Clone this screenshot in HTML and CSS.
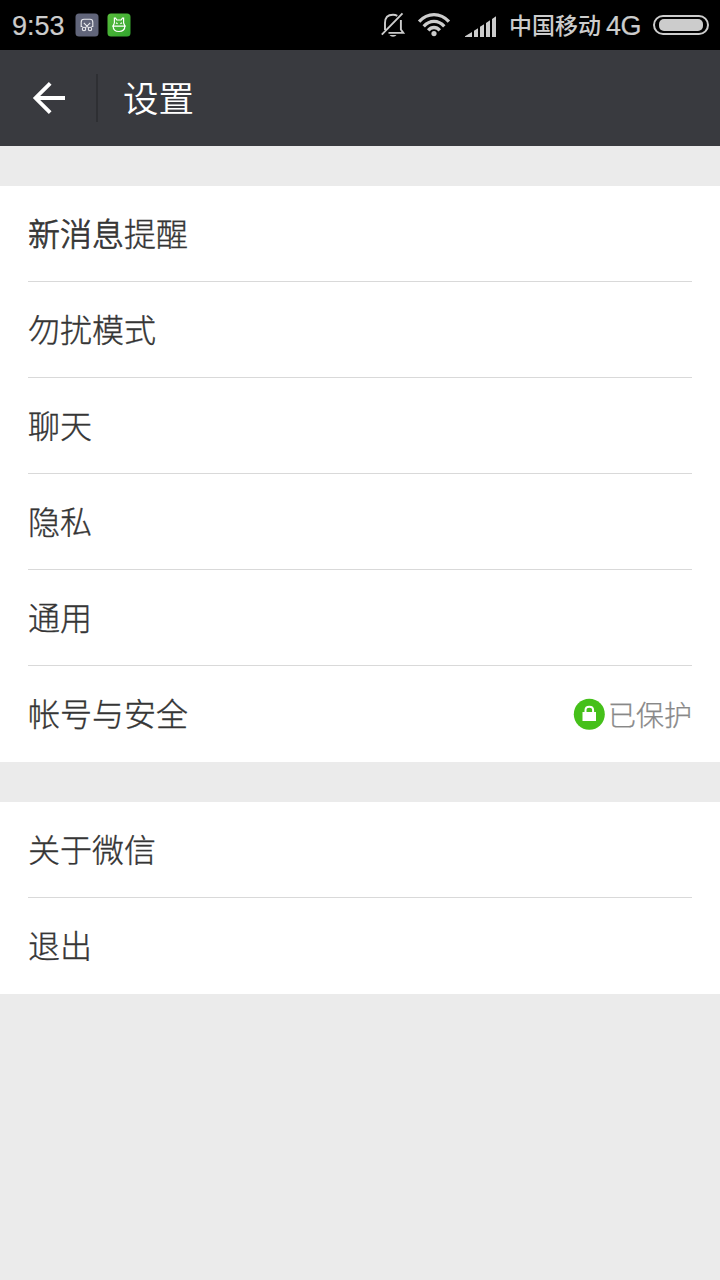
FILE: index.html
```html
<!DOCTYPE html>
<html lang="zh-CN">
<head>
<meta charset="utf-8">
<title>设置</title>
<link rel="stylesheet" href="styles.css">
</head>
<body>
<div class="status">
  <span class="time">9:53</span>
  <svg class="app-icon" width="24" height="24" viewBox="0 0 24 24">
    <rect x=".5" y=".5" width="23" height="23" rx="3.5" fill="#61657a"/>
    <g fill="none" stroke="#e9eaee" stroke-width="1.1">
      <path d="M7.5 13.5H6.2V9.2Q6.2 6.3 9 6.3H15Q17.8 6.3 17.8 9.2V13.5H16.5M8.8 9.8L13.7 14.8M15.2 9.8L10.3 14.8"/>
      <circle cx="9" cy="16" r="1.7"/><circle cx="15" cy="16" r="1.7"/>
    </g>
  </svg>
  <svg class="app-icon" width="24" height="24" viewBox="0 0 24 24">
    <defs><linearGradient id="leaf" x1="0" y1="0" x2="1" y2="1"><stop offset="0" stop-color="#58bd3c"/><stop offset="1" stop-color="#32a52e"/></linearGradient></defs>
    <rect x=".5" y=".5" width="23" height="23" rx="3.5" fill="url(#leaf)"/>
    <g fill="none" stroke="#fff" stroke-width="1.2">
      <path d="M7.4 10V5.2H8.6L9.8 7H14.2L15.4 5.2H16.6V10L17.9 12.8Q17.9 18.5 12 18.5Q6.1 18.5 6.1 12.8L7.4 10M5.2 13.2H18.8"/>
      <path d="M9 9.8L10.6 10.8M15 9.8L13.4 10.8"/>
    </g>
  </svg>
  <div class="signals">
    <svg class="bell" width="26" height="26" viewBox="0 0 26 26" fill="none" stroke="#ccc" stroke-width="1.9">
      <path d="M5 18V11Q5 2.7 13 2.7Q15.5 2.7 17.3 3.9M20.9 8V17.5L23.3 20.9H8.5M1.8 22.7L22.5 1.3"/>
      <path d="M9.5 23.1H16.5Q15.5 24.7 13 24.7Q10.5 24.7 9.5 23.1Z" fill="#ccc" stroke="none"/>
    </svg>
    <svg class="wifi" width="34" height="26" viewBox="0 0 34 26" fill="none" stroke="#ccc" stroke-width="3.3">
      <path d="M2.1 9.7Q8.5 2.7 17 2.7T31.9 9.7M6.7 14.4Q11.3 9.4 17 9.4T27.3 14.4M11.2 18.3Q13.7 15.5 17 15.5T22.8 18.3"/>
      <circle cx="17" cy="21.6" r="2.6" fill="#ccc" stroke="none"/>
    </svg>
    <svg class="bars" width="32" height="22" viewBox="0 0 32 22" fill="#ccc">
      <path d="M0 21V20.3L7 16V21ZM9 21V14.8L13 12.2V21ZM15 21V10.8L19 8.2V21ZM21 21V7L25 4.3V21ZM27 21V2.9L31 .2V21Z"/>
    </svg>
    <span class="carrier">中国移动</span>
    <span class="net">4G</span>
    <div class="battery"><div class="charge"></div></div>
  </div>
</div>
<header class="bar">
  <svg class="back" width="34" height="34" viewBox="0 0 34 34" fill="none" stroke="#fff" stroke-width="3.8">
    <path d="M18.2 2.3L3.5 17L18.2 31.7M3.5 17H33"/>
  </svg>
  <div class="divider"></div>
  <h1 class="title">设置</h1>
</header>
<main>
  <ul class="group">
    <li class="row"><span><span class="strong">新消息</span>提醒</span></li>
    <li class="row">勿扰模式</li>
    <li class="row">聊天</li>
    <li class="row">隐私</li>
    <li class="row">通用</li>
    <li class="row">帐号与安全
      <span class="state">
        <svg width="32" height="32" viewBox="0 0 32 32">
          <circle cx="16.3" cy="16.3" r="15.5" fill="#45c01a"/>
          <rect x="9.5" y="14" width="13.5" height="9" fill="#fff"/>
          <path d="M12.5 14.5V12Q12.5 8.7 16.3 8.7T20.1 12V14.5" fill="none" stroke="#fff" stroke-width="2"/>
        </svg>
        <span class="state-text">已保护</span>
      </span>
    </li>
  </ul>
  <ul class="group">
    <li class="row">关于微信</li>
    <li class="row">退出</li>
  </ul>
</main>
</body>
</html>
```
FILE: styles.css
```css
* { box-sizing: border-box; }
body {
  margin: 0;
  min-height: 1280px;
  background: #ebebeb;
  color: #353535;
  font-family: "Noto Sans CJK SC", sans-serif;
}
svg { display: block; flex: none; }
.status {
  height: 50px;
  padding: 0 11px 0 12px;
  display: flex;
  align-items: center;
  background: #000;
  color: #ccc;
}
.time {
  width: 63px;
  padding-top: 2px;
  font: 27px/50px "Liberation Sans", sans-serif;
  -webkit-text-stroke: .2px;
}
.app-icon { margin-right: 8px; }
.signals { height: 50px; margin-left: auto; display: flex; align-items: center; }
.bell { margin-right: 11px; }
.wifi { margin-right: 14px; }
.bars { margin: 3px 12px 0 0; }
.carrier { width: 92px; font-size: 23px; font-weight: 500; line-height: 48px; padding-bottom: 2px; white-space: nowrap; }
.net { width: 40px; margin-left: 5px; padding-top: 1px; font: 27px/50px "Liberation Sans", sans-serif; letter-spacing: -.5px; -webkit-text-stroke: .2px; }
.battery {
  width: 56px;
  height: 20px;
  margin-left: 7px;
  padding: 2px 4px;
  border: 2px solid #ccc;
  border-radius: 10px;
}
.charge { height: 12px; border-radius: 5px; background: #ccc; }
.bar {
  height: 96px;
  padding-left: 32px;
  display: flex;
  align-items: center;
  background: #393a3f;
  color: #fff;
}
.divider { width: 2px; height: 48px; margin: 0 25px 0 30px; background: #2e2f33; }
.title { margin: -3px 0 0; font-size: 35.5px; font-weight: 350; line-height: 93px; }
.group { margin: 40px 0 0; padding: 0; list-style: none; background: #fff; }
.row {
  height: 96px;
  margin: 0 28px;
  display: flex;
  align-items: center;
  justify-content: space-between;
  border-bottom: 1px solid #d9d9d9;
  font-size: 32px;
  font-weight: 300;
  line-height: 91px;
  padding-bottom: 2px;
  -webkit-text-stroke: .35px;
}
.row:last-child { border-bottom: 0; padding-bottom: 4px; }
.strong { -webkit-text-stroke: .75px; }
.state { display: flex; align-items: center; padding-top: 4px; color: #888; -webkit-text-stroke: .25px; }
.state-text { margin-left: 3px; font-size: 28px; }
```
